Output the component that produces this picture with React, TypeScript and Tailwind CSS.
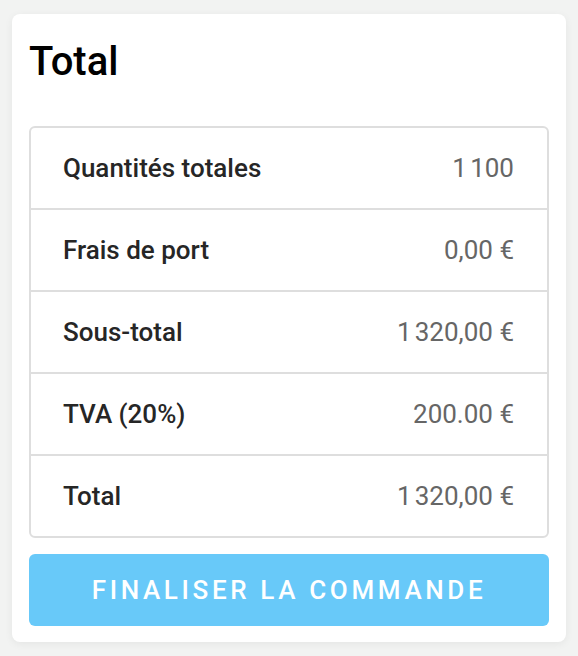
import React from "react";

const rows = [
  { label: "Quantités totales", value: "1\u202F100" },
  { label: "Frais de port", value: "0,00 €" },
  { label: "Sous-total", value: "1\u202F320,00 €" },
  { label: "TVA (20%)", value: "200.00 €" },
  { label: "Total", value: "1\u202F320,00 €" },
];

const App: React.FC = () => {
  return (
    <div className="min-h-screen bg-[#f2f3f2] px-3 pt-[14px] font-['Roboto',sans-serif]">
      <div className="rounded-lg bg-white px-[17px] pt-[26px] pb-4 shadow-[0_2px_8px_rgba(0,0,0,0.06)]">
        {/* Header */}
        <h2 className="text-[40px] leading-[44px] font-medium text-black">Total</h2>

        {/* Summary table */}
        <div className="mt-[42px] overflow-hidden rounded-md border-2 border-[#dedede]">
          {rows.map((row, i) => (
            <div
              key={row.label}
              className={
                "flex items-center justify-between pl-[32px] pr-[33px] text-[26px] " +
                (i > 0 ? "h-[82px] border-t-2 border-[#dedede]" : "h-[80px]")
              }
            >
              <span className="font-medium text-[#262626]">{row.label}</span>
              <span className="text-[#666]">{row.value}</span>
            </div>
          ))}
        </div>

        {/* Action */}
        <button className="mt-4 flex h-[72px] w-full items-center justify-center rounded-md bg-[#68c9f9] text-[26px] font-medium tracking-[0.14em] text-white uppercase">
          Finaliser la commande
        </button>
      </div>
    </div>
  );
};

export default App;
